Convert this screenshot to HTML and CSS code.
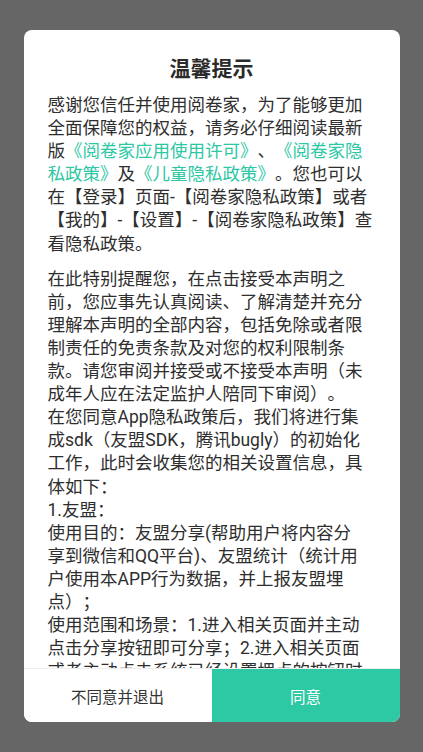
FILE: index.html
```html
<!DOCTYPE html>
<html lang="zh-CN">
<head>
<meta charset="utf-8">
<title>温馨提示</title>
<link rel="stylesheet" href="styles.css">
</head>
<body>
<div class="dialog">
  <h1 class="title">温馨提示</h1>
  <div class="content">
    <p class="para">感谢您信任并使用阅卷家，为了能够更加<br>全面保障您的权益，请务必仔细阅读最新<br>版<a class="link">《阅卷家应用使用许可》</a>、<a class="link">《阅卷家隐<br>私政策》</a>及<a class="link">《儿童隐私政策》</a>。您也可以<br>在【登录】页面-【阅卷家隐私政策】或者<br>【我的】-【设置】-【阅卷家隐私政策】查<br>看隐私政策。</p>
    <p class="para">在此特别提醒您，在点击接受本声明之<br>前，您应事先认真阅读、了解清楚并充分<br>理解本声明的全部内容，包括免除或者限<br>制责任的免责条款及对您的权利限制条<br>款。请您审阅并接受或不接受本声明（未<br>成年人应在法定监护人陪同下审阅）。<br>在您同意App隐私政策后，我们将进行集<br>成sdk（友盟SDK，腾讯bugly）的初始化<br>工作，此时会收集您的相关设置信息，具<br>体如下：<br>1.友盟：<br>使用目的：友盟分享(帮助用户将内容分<br>享到微信和QQ平台)、友盟统计（统计用<br>户使用本APP行为数据，并上报友盟埋<br>点）；<br>使用范围和场景：1.进入相关页面并主动<br>点击分享按钮即可分享；2.进入相关页面<br>或者主动点击系统已经设置埋点的按钮时<br>即可上报数据。</p>
  </div>
  <div class="actions">
    <button class="btn btn-cancel">不同意并退出</button>
    <button class="btn btn-ok">同意</button>
  </div>
</div>
</body>
</html>
```

FILE: styles.css
```css
html, body {
  margin: 0;
  padding: 0;
}
body {
  background: #666666;
  height: 752px;
  display: flex;
  align-items: center;
  justify-content: center;
  font-family: Roboto, "Noto Sans CJK SC", sans-serif;
  color: #333333;
  text-spacing-trim: space-all;
}
.dialog {
  width: 376px;
  height: 692px;
  background: #ffffff;
  border-radius: 8px;
  overflow: hidden;
  display: flex;
  flex-direction: column;
}
.title {
  margin: 0;
  padding-top: 24px;
  font-size: 21px;
  line-height: 30px;
  font-weight: 700;
  text-align: center;
  color: #2b2b2b;
}
.content {
  flex: 1;
  min-height: 0;
  overflow: hidden;
  padding: 10px 24px 0;
  font-size: 17.5px;
  line-height: 23.1px;
  white-space: nowrap;
  color: #2e2e2e;
}
.para {
  margin: 0 0 12px;
}
.link {
  color: #2dc7a3;
  text-decoration: none;
}
.actions {
  display: flex;
  height: 53px;
  border-top: 1px solid #eeeeee;
  flex-shrink: 0;
}
.btn {
  flex: 1;
  border: none;
  margin: 0;
  padding: 0;
  font-family: Roboto, "Noto Sans CJK SC", sans-serif;
  font-size: 15.5px;
  text-spacing-trim: space-all;
}
.btn-cancel {
  background: #ffffff;
  color: #333333;
}
.btn-ok {
  background: #2dc8a4;
  color: #ffffff;
}
```
